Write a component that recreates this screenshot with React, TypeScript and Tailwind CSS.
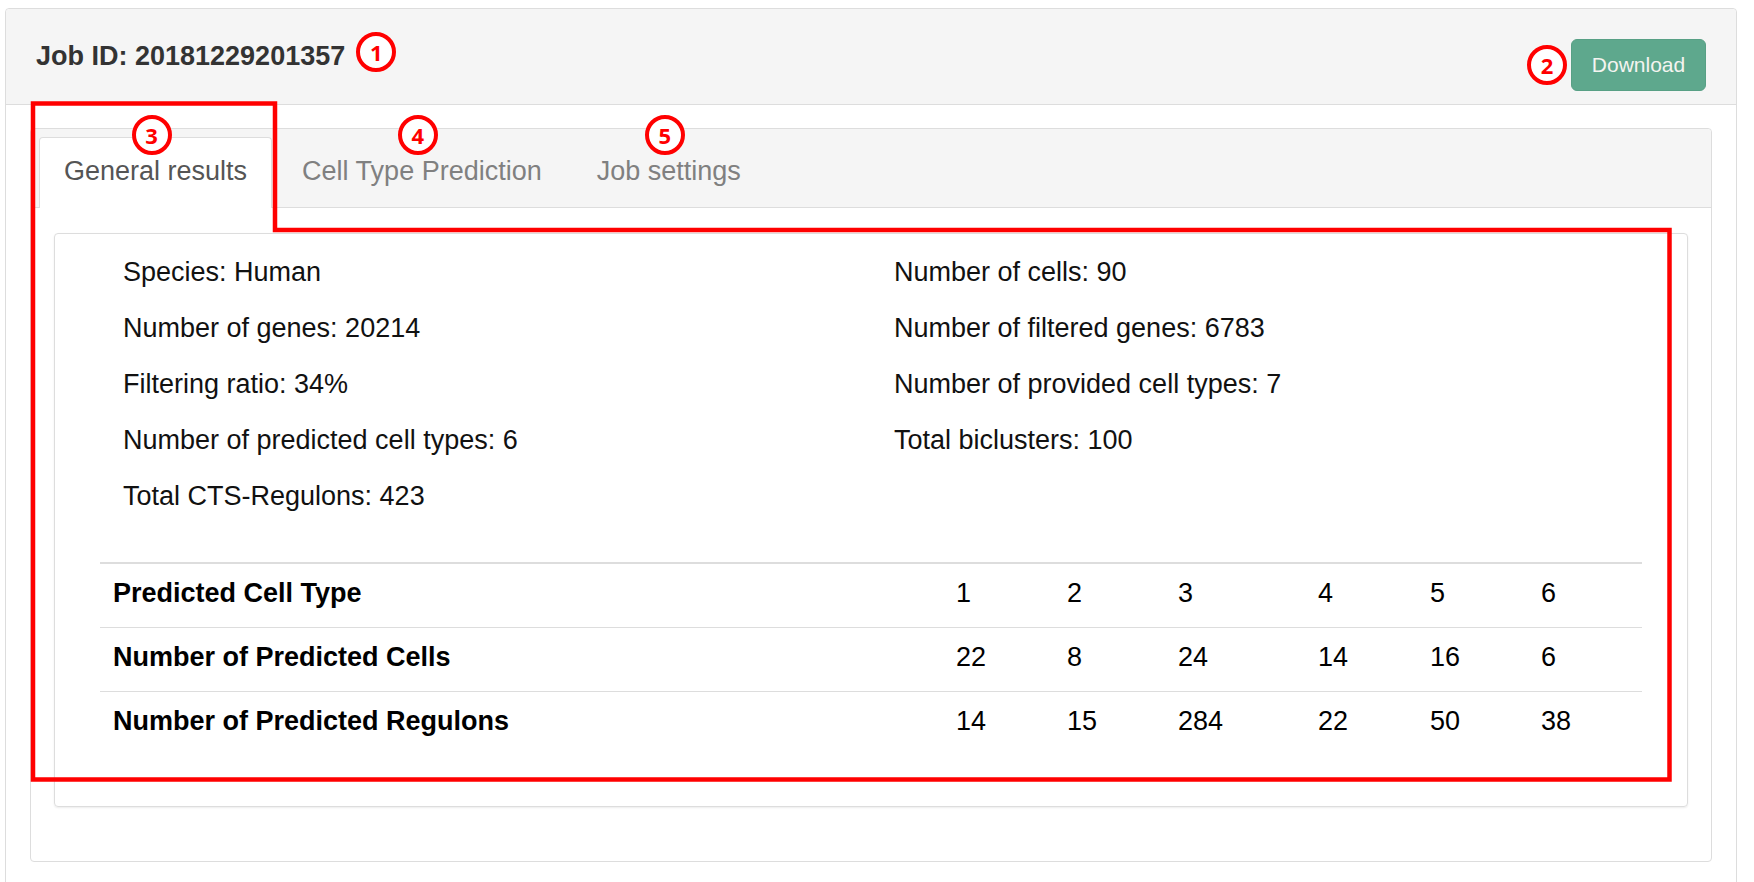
import React from "react";

const leftInfo = [
  "Species: Human",
  "Number of genes: 20214",
  "Filtering ratio: 34%",
  "Number of predicted cell types: 6",
  "Total CTS-Regulons: 423",
];

const rightInfo = [
  "Number of cells: 90",
  "Number of filtered genes: 6783",
  "Number of provided cell types: 7",
  "Total biclusters: 100",
];

const rows: [string, string[]][] = [
  ["Predicted Cell Type", ["1", "2", "3", "4", "5", "6"]],
  ["Number of Predicted Cells", ["22", "8", "24", "14", "16", "6"]],
  ["Number of Predicted Regulons", ["14", "15", "284", "22", "50", "38"]],
];

function Marker({ n, className = "" }: { n: number; className?: string }) {
  return (
    <div
      className={`w-[40px] h-[40px] shrink-0 rounded-full border-[4px] border-[#ff0000] bg-white flex items-center justify-center text-[22px] font-bold leading-none text-[#ff0000] font-['Open_Sans',sans-serif] ${className}`}
    >
      {n}
    </div>
  );
}

function Tab({
  label,
  n,
  active,
}: {
  label: string;
  n: number;
  active?: boolean;
}) {
  return (
    <div
      className={`relative h-[71px] px-[24px] pt-[14px] leading-[39px] text-[27px] rounded-t-[4px] border border-b-0 ${
        active
          ? "bg-white border-[#dddddd] text-[#555555]"
          : "border-transparent text-[#808080]"
      }`}
    >
      {label}
      <Marker
        n={n}
        className="absolute left-1/2 -translate-x-[24px] -top-[23px]"
      />
    </div>
  );
}

export default function App() {
  return (
    <div className="relative min-h-[882px] bg-white font-['Liberation_Sans',Arial,sans-serif] overflow-hidden">
      <div className="ml-[5px] mt-[8px] w-[1732px] border border-[#dddddd] rounded-[4px] bg-white">
        {/* header */}
        <div className="h-[96px] bg-[#f5f5f5] border-b border-[#dddddd] rounded-t-[4px] px-[30px] pt-[23px] flex items-start justify-between">
          <div className="flex items-start gap-[11px]">
            <div className="mt-[8px] text-[27px] leading-[32px] font-bold text-[#333333]">
              Job ID: 20181229201357
            </div>
            <Marker n={1} />
          </div>
          <div className="flex items-center gap-[4px] mt-[7px]">
            <Marker n={2} />
            <button className="w-[135px] h-[52px] rounded-[6px] bg-[#5ea88d] border border-[#58a085] text-[21px] text-[#f4f4f0]">
              Download
            </button>
          </div>
        </div>

        {/* body */}
        <div className="px-[24px] pt-[23px] pb-[40px]">
          <div className="border border-[#dddddd] rounded-[4px]">
            <div className="bg-[#f5f5f5] border-b border-[#dddddd] rounded-t-[4px] pl-[8px] pt-[8px] flex gap-[5px]">
              <div className="flex gap-[5px] -mb-px">
                <Tab label="General results" n={3} active />
                <Tab label="Cell Type Prediction" n={4} />
                <Tab label="Job settings" n={5} />
              </div>
            </div>

            <div className="px-[23px] pt-[25px] pb-[54px]">
              <div className="border border-[#dddddd] rounded-[4px] shadow-[0_1px_2px_rgba(0,0,0,0.08)] pt-[19px] pb-[51px]">
                <div className="ml-[45px] w-[1542px] grid grid-cols-2 text-[27px] leading-[39px] text-[#111111]">
                  <div className="pl-[23px] flex flex-col gap-[17px]">
                    {leftInfo.map((t) => (
                      <div key={t}>{t}</div>
                    ))}
                  </div>
                  <div className="pl-[23px] flex flex-col gap-[17px]">
                    {rightInfo.map((t) => (
                      <div key={t}>{t}</div>
                    ))}
                  </div>
                </div>

                <table className="ml-[45px] mt-[46px] w-[1542px] table-fixed border-collapse text-[27px] leading-[39px] text-black">
                  <colgroup>
                    <col className="w-[843px]" />
                    <col className="w-[111px]" />
                    <col className="w-[111px]" />
                    <col className="w-[140px]" />
                    <col className="w-[112px]" />
                    <col className="w-[111px]" />
                    <col className="w-[114px]" />
                  </colgroup>
                  <tbody>
                    {rows.map(([label, vals], i) => (
                      <tr
                        key={label}
                        className={
                          i === 0
                            ? "border-t-2 border-[#dddddd]"
                            : "border-t border-[#dddddd]"
                        }
                      >
                        <td className="pl-[13px] pt-[10px] pb-[14px] font-bold text-left">
                          {label}
                        </td>
                        {vals.map((v, j) => (
                          <td
                            key={j}
                            className="pl-[13px] pt-[10px] pb-[14px] text-left"
                          >
                            {v}
                          </td>
                        ))}
                      </tr>
                    ))}
                  </tbody>
                </table>
              </div>
            </div>
          </div>
        </div>
      </div>

      {/* red annotation outline */}
      <svg
        className="absolute inset-0 pointer-events-none"
        width="1754"
        height="882"
        viewBox="0 0 1754 882"
      >
        <path
          d="M33 103.5 H275 V230 H1669.5 V779.5 H33 Z"
          fill="none"
          stroke="#ff0000"
          strokeWidth="4.5"
          strokeLinejoin="miter"
        />
      </svg>
    </div>
  );
}
